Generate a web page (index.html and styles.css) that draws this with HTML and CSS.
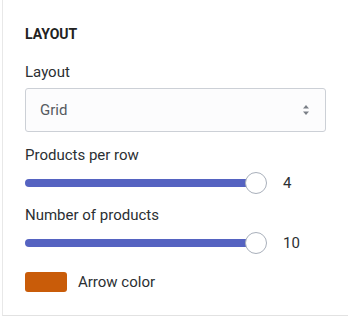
FILE: index.html
```html
<!DOCTYPE html>
<html lang="en">
<head>
    <meta charset="UTF-8">
    <meta name="viewport" content="width=device-width, initial-scale=1.0">
    <title>Layout settings</title>
    <link rel="stylesheet" href="styles.css">
</head>
<body>
    <div class="panel">
        <h4 class="panel-title">LAYOUT</h4>

        <div class="field-label first">Layout</div>
        <div class="select">
            <span>Grid</span>
            <svg class="select-arrows" width="8" height="14" viewBox="0 0 8 14">
                <path d="M4 2 L7 5.5 L1 5.5 Z" fill="#7a7f87"/>
                <path d="M4 12 L7 8.5 L1 8.5 Z" fill="#7a7f87"/>
            </svg>
        </div>

        <div class="field-label">Products per row</div>
        <div class="slider-row">
            <div class="track" style="width: 231px;"></div>
            <div class="thumb"></div>
            <span class="slider-value">4</span>
        </div>

        <div class="field-label">Number of products</div>
        <div class="slider-row">
            <div class="track" style="width: 231px;"></div>
            <div class="thumb"></div>
            <span class="slider-value">10</span>
        </div>

        <div class="color-row">
            <div class="swatch"></div>
            <span>Arrow color</span>
        </div>
    </div>
</body>
</html>
```

FILE: styles.css
```css
body {
    margin: 0;
    padding: 0;
    background-color: #ffffff;
    font-family: 'Roboto', sans-serif;
    color: #2b2f33;
}
.panel {
    margin-left: 2px;
    border-left: 1px solid #e8e8e8;
    border-bottom: 1px solid #e2e2e2;
    padding: 24px 0 23px 22px;
}
.panel-title {
    margin: 0;
    font-size: 14px;
    line-height: 20px;
    font-weight: 700;
    color: #222;
}
.field-label {
    font-size: 15px;
    line-height: 20px;
    margin-top: 13px;
    color: #2b2f33;
}
.field-label.first {
    margin-top: 18px;
}
.select {
    margin-top: 6px;
    width: 301px;
    height: 44px;
    box-sizing: border-box;
    border: 1px solid #ccd0d6;
    border-radius: 3px;
    background-color: #fcfcfd;
    display: flex;
    align-items: center;
    justify-content: space-between;
    padding: 0 15px 0 14px;
    font-size: 15px;
    color: #555a60;
}
.select-arrows {
    display: block;
}
.slider-row {
    margin-top: 7px;
    display: flex;
    align-items: center;
    height: 22px;
}
.track {
    height: 8px;
    border-radius: 4px;
    background-color: #5563c1;
}
.thumb {
    width: 22px;
    height: 22px;
    box-sizing: border-box;
    margin-left: -11px;
    border-radius: 50%;
    border: 1px solid #a9b0bb;
    background-color: #ffffff;
}
.slider-value {
    margin-left: 16px;
    font-size: 15px;
    color: #2b2f33;
}
.slider-row + .field-label {
    margin-top: 11px;
}
.color-row {
    margin-top: 18px;
    display: flex;
    align-items: center;
    font-size: 15px;
}
.swatch {
    width: 42px;
    height: 20px;
    border-radius: 3px;
    background-color: #c95c09;
    margin-right: 11px;
}
```
